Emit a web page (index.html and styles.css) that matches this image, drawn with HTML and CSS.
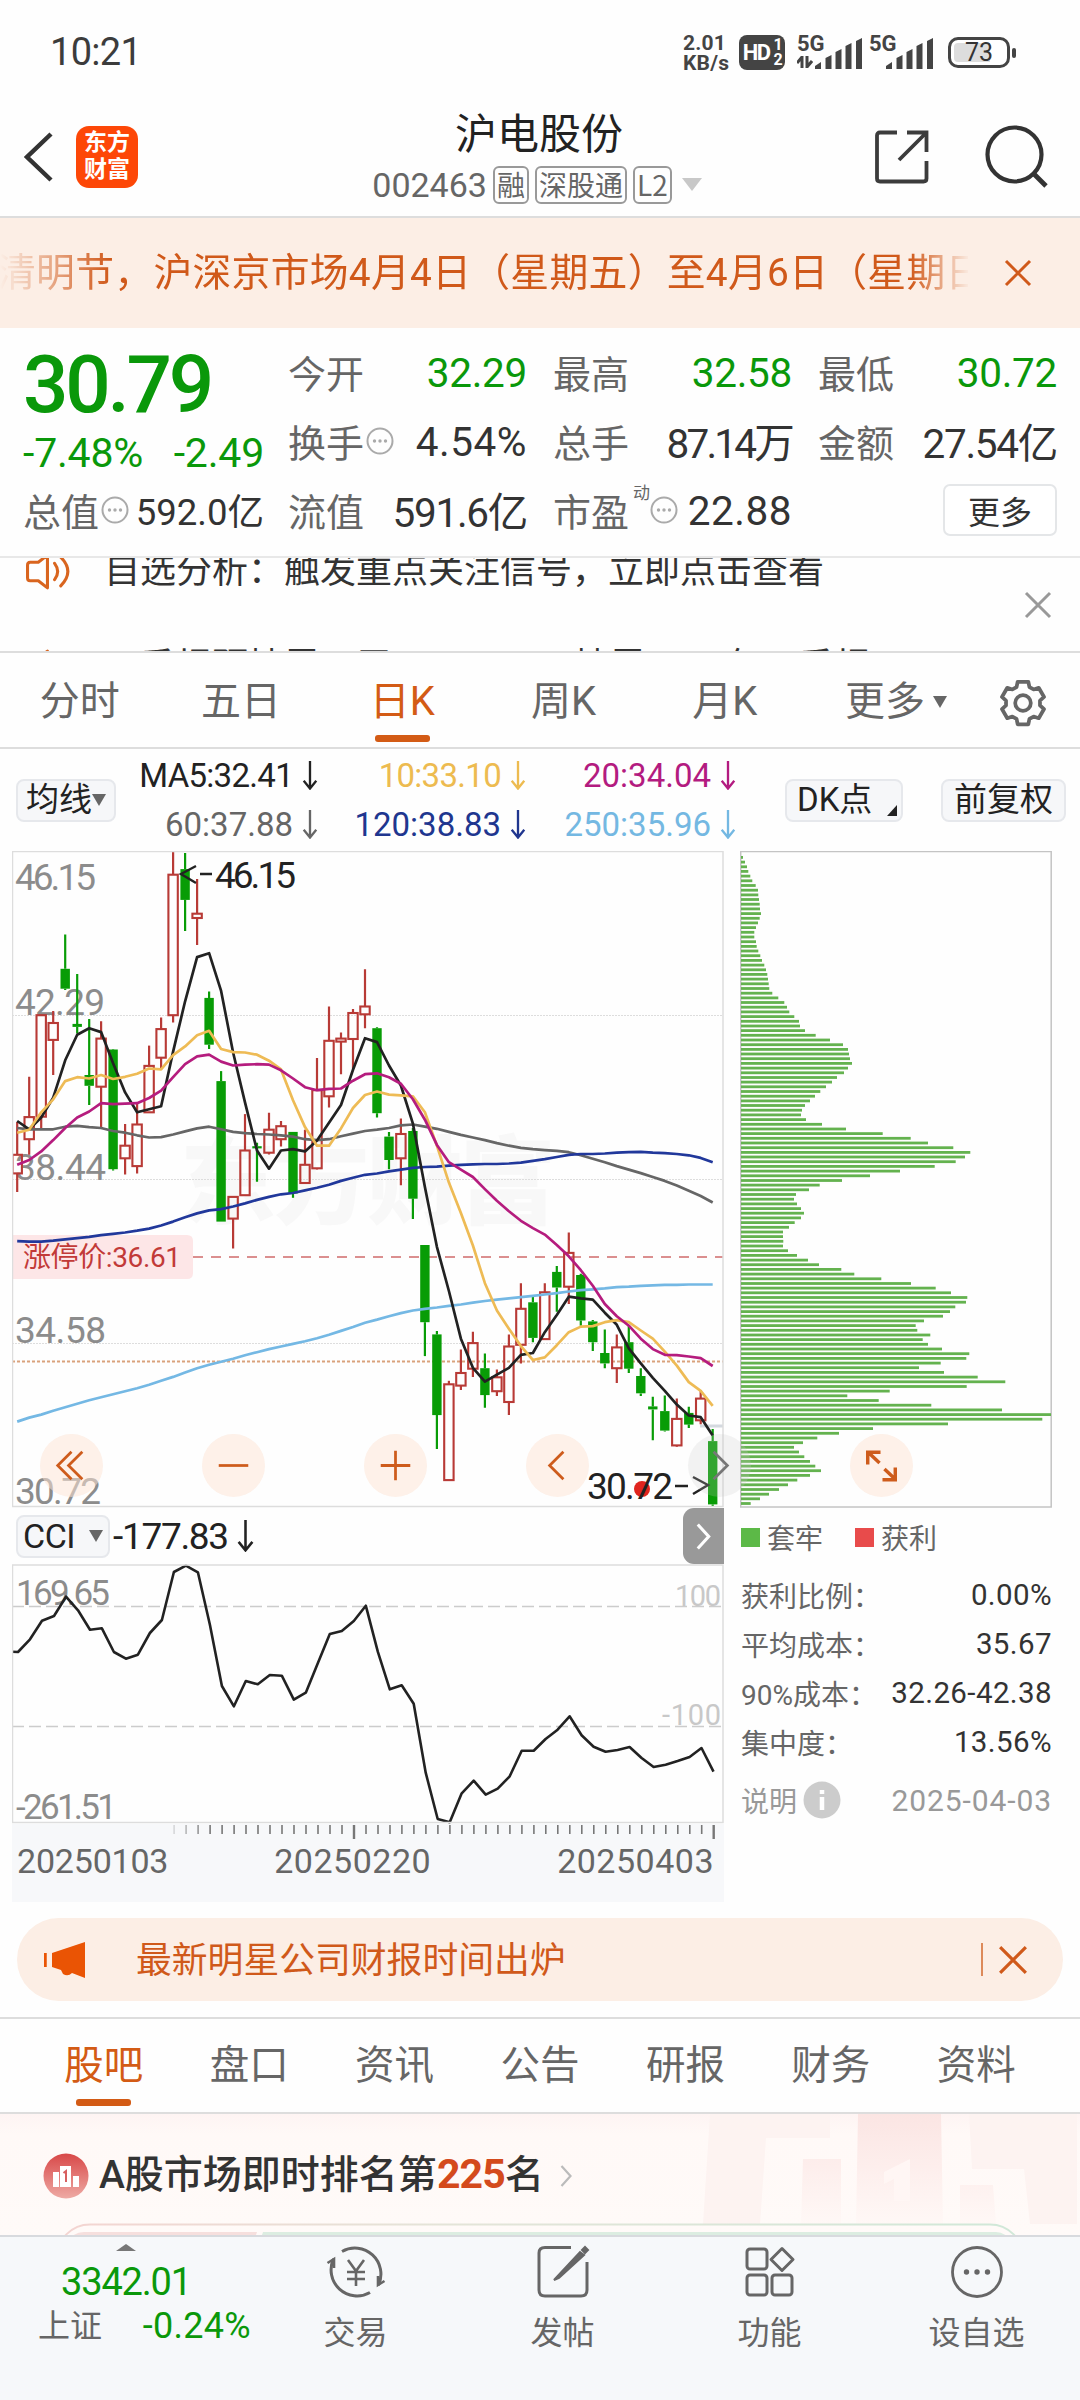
FILE: index.html
```html
<!DOCTYPE html>
<html lang="zh-CN">
<head>
<meta charset="utf-8">
<title>沪电股份 002463</title>
<link rel="stylesheet" href="styles.css">
</head>
<body>
<svg class="defs" width="0" height="0" aria-hidden="true">
  <symbol id="close" viewBox="0 0 28 28"><path d="M2 2 26 26M26 2 2 26" fill="none" stroke="currentColor" stroke-width="3"/></symbol>
  <symbol id="dots" viewBox="0 0 28 28"><circle cx="14" cy="14" r="12.500" fill="none" stroke="currentColor" stroke-width="2"/><g fill="currentColor"><circle cx="8.500" cy="14" r="1.700"/><circle cx="14" cy="14" r="1.700"/><circle cx="19.500" cy="14" r="1.700"/></g></symbol>
  <symbol id="down" viewBox="0 0 16 30"><path d="M8 0V28M1.500 20.500 8 28.500 14.500 20.500" fill="none" stroke="currentColor" stroke-width="2.400"/></symbol>
  <symbol id="speaker" viewBox="0 0 46 36"><g fill="none" stroke="currentColor" stroke-width="3" stroke-linecap="round" stroke-linejoin="round"><path d="M21 34 12 27H4Q1.500 27 1.500 24V12Q1.500 9 4 9H12L21 2Z"/><path d="M28 10Q34 18 28 26M34 4Q48 18 34 32"/></g></symbol>
  <symbol id="bars" viewBox="0 0 49 31"><path d="M1 31V28L7 24V31ZM11.500 31V20L17.500 17V31ZM21.500 31V14L27.500 11V31ZM31.500 31V8L37.500 5V31ZM42 31V3L48 0V31Z" fill="currentColor"/></symbol>
</svg>

<header class="status">
  <span class="clock">10:21</span>
  <span class="net">2.01<br>KB/s</span>
  <span class="hd">HD<small>1<br>2</small></span>
  <span class="signal"><b>5G</b><svg class="arrows" viewBox="0 0 16 12"><path d="M5 12V1L0 7M10 0V11L15 5" fill="none" stroke="#444" stroke-width="3"/></svg><svg class="bars"><use href="#bars"/></svg></span>
  <span class="signal second"><b>5G</b><svg class="bars"><use href="#bars"/></svg></span>
  <span class="battery"><i></i>73</span>
</header>

<nav class="topbar">
  <svg class="back" viewBox="0 0 30 50"><path d="M27 2 3 25 27 48" fill="none" stroke="#333" stroke-width="4.500"/></svg>
  <span class="logo">东方<br>财富</span>
  <div class="title">
    <h1>沪电股份</h1>
    <div class="code"><span>002463</span><em>融</em><em>深股通</em><em>L2</em><i class="tri"></i></div>
  </div>
  <svg class="share" viewBox="0 0 54 54"><path d="M22 2.500H5Q2 2.500 2 5.500V48.500Q2 51.500 5 51.500H48.500Q51.500 51.500 51.500 48.500V31M32 2.500H51.500V22M51 3 24 30" fill="none" stroke="#3c3c3c" stroke-width="3.800"/></svg>
  <svg class="search" viewBox="0 0 64 64"><circle cx="29.500" cy="29.500" r="27" fill="none" stroke="#333" stroke-width="4.200"/><path d="M48 48 61 61" stroke="#333" stroke-width="4.800"/></svg>
</nav>

<section class="notice">
  <div class="marquee">清明节，沪深京市场4月4日（星期五）至4月6日（星期日</div>
  <svg class="x"><use href="#close"/></svg>
</section>

<section class="quote">
  <div class="price">
    <strong>30.79</strong>
    <div class="change"><span>-7.48%</span><span>-2.49</span></div>
    <div class="pair cap"><label>总值</label><svg class="dots"><use href="#dots"/></svg><b>592.0亿</b></div>
  </div>
  <div class="facts">
    <div class="pair"><label>今开</label><b class="g">32.29</b></div>
    <div class="pair"><label>最高</label><b class="g">32.58</b></div>
    <div class="pair"><label>最低</label><b class="g">30.72</b></div>
    <div class="pair"><label>换手</label><svg class="dots"><use href="#dots"/></svg><b class="wide">4.54%</b></div>
    <div class="pair"><label>总手</label><b class="narrow">87.14万</b></div>
    <div class="pair"><label>金额</label><b class="tight">27.54亿</b></div>
    <div class="pair"><label>流值</label><b class="tight">591.6亿</b></div>
    <div class="pair"><label>市盈</label><sup>动</sup><svg class="dots"><use href="#dots"/></svg><b class="wide">22.88</b></div>
    <div class="pair"><button>更多</button></div>
  </div>
</section>

<section class="ticker">
  <div class="reel">
    <p><svg><use href="#speaker"/></svg>自选分析：触发重点关注信号，立即点击查看</p>
    <p><svg><use href="#speaker"/></svg>一季报预披露：于2025-04-25披露2025年一季报</p>
  </div>
  <svg class="x"><use href="#close"/></svg>
</section>

<nav class="periods">
  <span>分时</span><span>五日</span><span class="on">日K</span><span>周K</span><span>月K</span><span class="more">更多<i class="tri"></i></span>
  <svg class="gear" viewBox="0 0 48 48"><g fill="none" stroke="#666" stroke-width="3.600" stroke-linejoin="round"><path d="M18.900 3.600H29.100L30.200 8.700 34.200 11 39.100 9.400 44.200 18.200 40.300 21.700V26.300L44.200 29.800 39.100 38.600 34.200 37 30.200 39.300 29.100 44.400H18.900L17.800 39.300 13.800 37 8.900 38.600 3.800 29.800 7.700 26.300V21.700L3.800 18.200 8.900 9.400 13.800 11 17.800 8.700Z"/><circle cx="24" cy="24" r="7.500"/></g></svg>
</nav>

<section class="averages">
  <span class="chip">均线<i class="tri"></i></span>
  <div class="ma">
    <span class="c5">MA5:32.41<svg><use href="#down"/></svg></span><span class="c10">10:33.10<svg><use href="#down"/></svg></span><span class="c20">20:34.04<svg><use href="#down"/></svg></span>
    <span class="c60">60:37.88<svg><use href="#down"/></svg></span><span class="c120">120:38.83<svg><use href="#down"/></svg></span><span class="c250">250:35.96<svg><use href="#down"/></svg></span>
  </div>
  <span class="chip dk">DK点<i class="corner"></i></span>
  <span class="chip">前复权</span>
</section>

<section class="charts">
  <div class="left">
    <svg id="kline" viewBox="12 851 712 657" width="712" height="657"></svg>
    <div class="indicator">
      <span class="chip">CCI<i class="tri"></i></span><b>-177.83</b><svg class="arrow"><use href="#down"/></svg>
      <span class="fold"><svg viewBox="0 0 14 26"><path d="M1.500 1.500 12 13 1.500 24.500" fill="none" stroke="#fff" stroke-width="3"/></svg></span>
    </div>
    <svg id="cci" viewBox="12 1564 712 260" width="712" height="260"></svg>
    <div class="axis">
      <svg id="ticks" viewBox="12 1824 712 16" width="712" height="16"></svg>
      <div class="dates"><span>20250103</span><span>20250220</span><span>20250403</span></div>
    </div>
  </div>
  <div class="right">
    <svg id="chips" viewBox="740 851 312 657" width="312" height="657"></svg>
    <div class="legend"><i class="lose"></i>套牢<i class="win"></i>获利</div>
    <dl>
      <div><dt>获利比例：</dt><dd>0.00%</dd></div>
      <div><dt>平均成本：</dt><dd>35.67</dd></div>
      <div><dt>90%成本：</dt><dd>32.26-42.38</dd></div>
      <div><dt>集中度：</dt><dd>13.56%</dd></div>
    </dl>
    <div class="explain">说明<svg viewBox="0 0 38 38"><circle cx="19" cy="19" r="18.500" fill="#ccc"/><path d="M19 9V13M19 16V29" stroke="#fff" stroke-width="4.500"/></svg><time>2025-04-03</time></div>
  </div>
  <div class="controls">
    <i><svg viewBox="0 0 64 64"><path d="M32 18 18 32 32 46M43 18 29 32 43 46"/></svg></i>
    <i><svg viewBox="0 0 64 64"><path d="M17 32H47"/></svg></i>
    <i><svg viewBox="0 0 64 64"><path d="M17 32H47M32 17V47"/></svg></i>
    <i><svg viewBox="0 0 64 64"><path d="M38 18 24 32 38 46"/></svg></i>
    <i class="off"><svg viewBox="0 0 64 64"><path d="M26 18 40 32 26 46"/></svg></i>
    <i><svg viewBox="0 0 64 64"><path stroke-width="3.500" d="M18 31V18.500H31M19 19 30 29.500M46 34V46.500H33M46 46 35 35.500"/></svg></i>
  </div>
</section>

<section class="promo">
  <svg class="horn" viewBox="0 0 42 36"><path d="M1 11V25" stroke="#ea5404" stroke-width="3.500"/><path d="M8 11 41 0V36L28 31Q24 35 19 32L17 28 8 25Z" fill="#ea5404"/></svg>
  <span>最新明星公司财报时间出炉</span>
  <i></i><svg class="x"><use href="#close"/></svg>
</section>

<nav class="tabs"><span class="on">股吧</span><span>盘口</span><span>资讯</span><span>公告</span><span>研报</span><span>财务</span><span>资料</span></nav>

<section class="rank">
  <svg class="podium" viewBox="700 2113 380 122" width="380" height="122">
    <defs><linearGradient id="fade" x2="0" y2="1"><stop stop-color="#fbe5e3"/><stop offset="1" stop-color="#fff8f6"/></linearGradient></defs>
    <path d="M710 2113H830V2137H766L760 2223H703ZM969 2113H1077V2223H1030L1024 2168H972Z" fill="#fdf3f1"/>
    <path d="M803 2158H841V2223H801ZM960 2184H993L996 2223H960ZM858 2113H941L943 2223H856Z" fill="url(#fade)"/>
    <path d="M910 2158V2200H894V2178L884 2183V2171Z" fill="#fff6f4"/>
  </svg>
  <div class="line">
    <svg class="badge" viewBox="0 0 46 46"><defs><linearGradient id="rb" x2="0" y2="1"><stop stop-color="#d84848"/><stop offset="1" stop-color="#eeaaa4"/></linearGradient></defs><circle cx="23" cy="23" r="22.500" fill="url(#rb)"/><path d="M10 19H16V34H10ZM17 13H28V34H17ZM30 23H36V34H30Z" fill="#fff"/><path d="M20.500 20 23 18V29" fill="none" stroke="#d86060" stroke-width="2"/></svg>
    <h2>A股市场即时排名第<b>225</b>名</h2>
    <svg class="next" viewBox="0 0 12 22"><path d="M1.500 1 10.500 11 1.500 21" fill="none" stroke="#bbb" stroke-width="2.200"/></svg>
  </div>
  <svg class="meter" viewBox="60 2222 960 14" width="960" height="14">
    <defs><linearGradient id="rim"><stop stop-color="#f4d4d1"/><stop offset=".4" stop-color="#e4e4d8"/><stop offset="1" stop-color="#d0e8d8"/></linearGradient></defs>
    <rect x="57" y="2223.500" width="966" height="66" rx="33" fill="none" stroke="url(#rim)" stroke-width="2"/>
    <path d="M70 2237Q76 2231 84 2231H257L255 2237Z" fill="#f6dfdd"/><path d="M263 2231H996Q1003 2231 1009 2237H261Z" fill="#dcede1"/>
  </svg>
</section>

<footer>
  <div class="index"><i class="up"></i><b>3342.01</b><div><span>上证</span><b>-0.24%</b></div></div>
  <div class="item"><svg viewBox="0 0 60 56"><g fill="none" stroke="#666" stroke-width="3"><path d="M16 7.500A26 26 0 0 1 52.500 41M44 48.500A26 26 0 0 1 7.500 15"/><path d="M1.500 19 8 15V24M58.500 37 52 41V32M22 16 30 27 38 16M30 27V42M21 28H39M21 35H39" stroke-width="2.600"/></g></svg>交易</div>
  <div class="item"><svg viewBox="0 0 60 56"><path d="M38 3.500H12Q6 3.500 6 9V46Q6 52 12 52H48Q54 52 54 46V18" fill="none" stroke="#666" stroke-width="3"/><path d="M21 36 47 8 51 11 26 34ZM49 6 52 3 55 6 52 9Z" fill="#666" stroke="#666" stroke-width="2"/></svg>发帖</div>
  <div class="item"><svg viewBox="0 0 60 56"><g fill="none" stroke="#666" stroke-width="3"><rect x="7" y="5" width="20" height="20" rx="3"/><rect x="7" y="31" width="20" height="20" rx="3"/><rect x="32" y="31" width="20" height="20" rx="3"/><path d="M42 4.500 53 15.500 42 26.500 31 15.500Z" stroke-linejoin="round"/></g></svg>功能</div>
  <div class="item"><svg viewBox="0 0 60 56"><circle cx="30" cy="28" r="24.500" fill="none" stroke="#666" stroke-width="2.800"/><g fill="#666"><circle cx="19.500" cy="28" r="2.700"/><circle cx="30" cy="28" r="2.700"/><circle cx="40.500" cy="28" r="2.700"/></g></svg>设自选</div>
</footer>
<script src="chart.js"></script>
</body>
</html>
```

FILE: styles.css
```css
* { box-sizing: border-box; margin: 0; padding: 0; }
body { width: 1080px; height: 2400px; overflow: hidden; background: #fefefe; color: #333; font-family: Roboto, "Noto Sans CJK SC", sans-serif; font-size: 38px; }
svg { display: block; flex: none; }
i, em { font-style: normal; }
b { font-weight: 400; }
.defs { position: absolute; }
.tri { width: 0; height: 0; flex: none; border: 7px solid transparent; border-top: 12px solid #666; border-bottom: 0; }
.x { width: 28px; height: 28px; }

.status { height: 104px; display: flex; align-items: center; padding: 0 70px 0 50px; color: #444; }
.clock { font-size: 38px; font-weight: 400; margin-right: auto; letter-spacing: -.7px; color: #3c3c3c; }
.net { font-size: 21px; line-height: 20px; font-weight: 700; width: 56px; letter-spacing: .2px; padding-top: 2px; }
.hd { width: 46px; height: 35px; border-radius: 8px; background: #444; color: #fff; font-size: 22px; font-weight: 700; display: flex; align-items: center; justify-content: center; margin-right: 12px; letter-spacing: -1.5px; }
.hd small { font-size: 16px; line-height: 15px; margin-left: 4px; }
.signal { position: relative; width: 66px; height: 34px; margin-right: 6px; display: flex; align-items: flex-end; justify-content: flex-end; }
.signal b { position: absolute; left: 0; top: -2px; font-size: 22px; line-height: 22px; font-weight: 700; }
.signal .bars { width: 49px; height: 31px; color: #444; }
.signal .arrows { position: absolute; left: 0; bottom: 1px; width: 16px; height: 12px; }
.signal.second { margin-right: 14px; width: 65px; }
.battery { position: relative; width: 62px; height: 31px; border: 3px solid #444; border-radius: 10px; font-size: 25px; line-height: 26px; text-align: center; color: #333; background: linear-gradient(90deg, #ddd 70%, #fff 70%); box-shadow: inset 0 0 0 3px #fff; }
.battery i { position: absolute; right: -9px; top: 8px; width: 4px; height: 10px; border-radius: 2px; background: #444; }

.topbar { height: 114px; border-bottom: 2px solid #ddd; display: flex; align-items: center; padding: 0 31px 7px 24px; }
.back { width: 30px; height: 50px; }
.logo { width: 62px; height: 62px; margin-left: 22px; border-radius: 13px; background: #fd4707; color: #fff; font-size: 23px; font-weight: 700; line-height: 27px; text-align: center; padding-top: 3px; }
.title { flex: 1; padding-left: 61px; display: flex; flex-direction: column; align-items: center; }
h1 { font-size: 42px; line-height: 54px; font-weight: 400; color: #222; position: relative; left: 2px; }
.code { display: flex; align-items: center; gap: 6px; font-size: 34px; line-height: 42px; color: #666; margin-top: 2px; }
.code em { border: 2px solid #999; border-radius: 6px; height: 38px; line-height: 33px; font-size: 28px; padding: 0 2px; font-family: "Noto Sans CJK SC"; letter-spacing: 0; }
.code .tri { border-width: 13px 10px 0; border-top-color: #c8c8c8; margin-left: 4px; }
.share { width: 54px; height: 54px; }
.search { width: 64px; height: 64px; margin-left: 56px; }

.notice { height: 110px; background: #fceee5; display: flex; align-items: center; justify-content: space-between; padding-right: 48px; color: #d0591a; }
.marquee { width: 968px; overflow: hidden; white-space: nowrap; font-size: 38.800px; text-indent: -3px; letter-spacing: .3px; line-height: 60px; -webkit-mask-image: linear-gradient(90deg, transparent, #000 110px, #000 910px, transparent 970px); mask-image: linear-gradient(90deg, transparent, #000 110px, #000 910px, transparent 970px); }

.quote { height: 230px; border-bottom: 2px solid #e8e8e8; display: flex; padding: 10px 22px 0 23px; }
.price { width: 241px; color: #0a980a; margin-right: 24px; }
.price strong { display: block; font-size: 80px; line-height: 94px; height: 94px; font-weight: 500; letter-spacing: -3.200px; }
.change { display: flex; justify-content: space-between; font-size: 41px; line-height: 42px; height: 43px; letter-spacing: -.2px; }
.facts { flex: 1; display: grid; grid-template-columns: repeat(3, 239px); column-gap: 26px; grid-auto-rows: 69px; margin-top: -1px; }
.pair { display: flex; align-items: center; height: 69px; white-space: nowrap; }
.pair label { color: #666; font-size: 38px; margin-top: -1px; }
.pair b { margin-left: auto; color: #333; font-size: 40.500px; letter-spacing: -.7px; }
.pair b.g { color: #0a980a; letter-spacing: -.3px; margin-top: 2px; }
.pair b.wide { letter-spacing: .5px; margin-top: 2px; }
.pair b.tight { letter-spacing: -1.3px; }
.pair b.narrow { letter-spacing: -2.800px; }
.pair.cap b { font-size: 36.500px; letter-spacing: 0; }
.dots { width: 28px; height: 28px; margin-left: 2px; color: #aaa; }
.pair sup { font-size: 17px; line-height: 17px; align-self: flex-start; margin: 10px 0 0 4px; color: #666; width: 17px; }
.pair sup + .dots { margin-left: 0; }
.pair button { margin-left: auto; width: 114px; height: 52px; border: 2px solid #e4e6e8; border-radius: 7px; background: #fff; color: #333; font: 32px "Noto Sans CJK SC"; line-height: 46px; }

.ticker { position: relative; height: 95px; overflow: hidden; border-bottom: 2px solid #ddd; display: flex; align-items: center; justify-content: space-between; padding-right: 28px; }
.reel { align-self: flex-start; margin-top: -35px; }
.reel p { display: flex; align-items: center; height: 96px; padding-left: 26px; font-size: 36px; line-height: 40px; }
.reel svg { width: 47px; height: 37px; margin-right: 31px; color: #d9651f; }
.ticker .x { color: #999; }

.periods { height: 96px; border-bottom: 2px solid #ddd; display: flex; align-items: flex-start; padding: 25px 32px 0 0; line-height: 48px; font-size: 40px; color: #666; }
.periods span { width: 161.300px; text-align: center; position: relative; left: -1px; }
.periods .on, .tabs .on { color: #d35b15; }
.periods .on::after, .tabs .on::after { content: ""; display: block; width: 55px; height: 7px; border-radius: 3px; background: #d35b15; margin: 9px auto 0; }
.periods .more { width: 180px; display: flex; align-items: center; justify-content: center; gap: 8px; margin-left: auto; }
.gear { width: 50px; height: 50px; margin-left: 11px; }

.averages { height: 102px; display: flex; align-items: center; padding: 0 14px 0 16px; }
.chip { height: 43px; border: 2px solid #e6e8ec; border-radius: 8px; background: #f6f7f9; font-size: 33px; line-height: 36px; padding: 0 8px; color: #222; display: flex; align-items: center; }
.averages .chip:last-child { padding: 0 11px; }
.ma { display: grid; grid-template-columns: 202px 208px 210px; grid-auto-rows: 49px; margin-right: auto; line-height: 49px; font-size: 33px; letter-spacing: -.7px; }
.ma span { display: flex; align-items: center; justify-content: flex-end; }
.ma svg { width: 16px; height: 29px; margin-left: 9px; }
.c5 { color: #222; } .c10 { color: #edbb50; } .c20 { color: #b31b80; } .c60 { color: #666; } .c120 { color: #20368f; } .c250 { color: #74b8e2; }
.ma .c20, .ma .c60, .ma .c120, .ma .c250 { letter-spacing: 0; }
.dk { margin-right: 38px; width: 118px; position: relative; padding: 0 10px; }
.corner { position: absolute; right: 4px; bottom: 4px; border-style: solid; border-width: 0 0 11px 10px; border-color: transparent transparent #222; }

.charts { position: relative; height: 1067px; padding-left: 12px; display: flex; gap: 16px; }
.left { width: 712px; }
.right { width: 312px; font-size: 28px; color: #666; }
.indicator { height: 56px; display: flex; align-items: center; font-size: 37px; color: #222; padding-left: 4px; }
.indicator .chip { width: 94px; padding: 0 5px; font-size: 34px; justify-content: space-between; letter-spacing: -.5px; }
.indicator b { letter-spacing: -1.3px; margin-left: 3px; }
.indicator .arrow { width: 17px; height: 32px; margin-left: 9px; }
.fold { width: 41px; height: 56px; margin-left: auto; background: #999; border-radius: 11px 0 0 11px; display: flex; align-items: center; justify-content: center; }
.fold svg { width: 15px; height: 27px; }
.axis { height: 78px; background: #f7f8fa; }
.dates { display: flex; justify-content: space-between; padding: 0 10px 0 5px; font-size: 34px; line-height: 42px; color: #666; letter-spacing: .5px; }
.dates span:first-child { letter-spacing: -.2px; }
.dates span:nth-child(2) { margin-right: 20px; }
.legend { height: 58px; display: flex; align-items: center; }
.legend i { width: 19px; height: 19px; margin: 0 7px 0 1px; background: #5cb947; }
.legend .win { margin-left: 32px; background: #e84b4b; }
dl div { display: flex; justify-content: space-between; align-items: center; height: 48.800px; padding-left: 1px; }
dl { padding-top: 5px; }
dd { color: #333; font-size: 29.500px; letter-spacing: .4px; }
dt { font-size: 28px; white-space: nowrap; width: 130px; }
.explain { display: flex; align-items: center; height: 60px; margin-top: 4px; color: #999; padding-left: 1px; }
.explain svg { width: 38px; height: 38px; margin-left: 6px; }
.explain time { margin-left: auto; font-size: 30px; letter-spacing: .9px; }
.controls i { position: absolute; top: 583px; width: 63px; height: 63px; border-radius: 50%; background: rgba(253, 228, 212, .52); }
.controls svg { width: 63px; height: 63px; fill: none; stroke: #ce5c1c; stroke-width: 2.800; }
.controls i:nth-child(1) { left: 40px; } .controls i:nth-child(2) { left: 202px; } .controls i:nth-child(3) { left: 364px; } .controls i:nth-child(4) { left: 526px; } .controls i:nth-child(5) { left: 688px; } .controls i:nth-child(6) { left: 850px; }
.controls .off { background: rgba(200, 200, 200, .22); }
.controls .off svg { stroke: #777; }

.promo { margin: 0 17px; height: 83px; border-radius: 42px; background: #fceee5; color: #d0591a; display: flex; align-items: center; padding: 0 35px 0 27px; font-size: 35.800px; }
.promo span { line-height: 48px; margin-top: 2px; }
.horn { width: 42px; height: 36px; margin-right: 50px; }
.promo i { width: 2px; height: 33px; background: #dd8a5a; margin: 0 15px 0 auto; }
.promo .x { width: 30px; height: 30px; }

.tabs { margin-top: 16px; height: 97px; border-top: 2px solid #ddd; border-bottom: 2px solid #ddd; padding: 23px 31px 0; display: flex; font-size: 39.500px; line-height: 48px; color: #666; }
.tabs span { flex: 1; text-align: center; }
.tabs .on::after { margin-top: 9px; }

.rank { position: relative; height: 121px; background: linear-gradient(#fef4f3, #fff9f7 20px, #fffaf8); overflow: hidden; }
.podium { position: absolute; right: 0; top: 0; }
.line { position: relative; display: flex; align-items: center; height: 109px; padding: 14px 0 0 43px; }
.badge { width: 46px; height: 46px; margin-right: 10px; }
h2 { font-size: 39px; line-height: 50px; font-weight: 500; color: #333; margin-top: -2px; }
h2 b { font-weight: 700; color: #d44a1c; font-size: 41px; letter-spacing: -.8px; }
.next { width: 12px; height: 22px; margin-left: 16px; }
.meter { position: relative; margin-left: 60px; }

footer { height: 166px; background: #f6f8fa; border-top: 2px solid #d8dade; display: flex; font-size: 32px; color: #666; }
.index { width: 252px; display: flex; flex-direction: column; align-items: center; color: #0a980a; }
.index .up { margin-top: 7px; border: 10px solid transparent; border-top: 0; border-bottom: 7px solid #777; height: 7px; }
.index > b { font-size: 38px; line-height: 44px; margin-top: 9px; letter-spacing: -1.2px; }
.index div { align-self: stretch; display: flex; justify-content: space-between; padding: 0 1px 0 38px; line-height: 44px; font-size: 36px; }
.index div b { letter-spacing: .3px; }
.index span { color: #666; font-size: 32px; }
.item { flex: 1; display: flex; flex-direction: column; align-items: center; line-height: 46px; padding-top: 7px; }
.item svg { width: 60px; height: 56px; margin-bottom: 10px; }
```

FILE: chart.js
```js
// Horizontal position of the n-th trading day and vertical scale of the price pane.
const dayX = n => 17.2 + n * 11.992;
const py = v => 840 + v / 2.3059;
const f = v => v.toFixed(1);

// [rising, high, bodyTop, bodyBottom, low]
const candles = [
  [1,650,726,769,812],[1,546,639,690,726],[1,403,404,638,664],[1,394,422,461,542],[0,218,297,343,346],
  [0,309,424,431,446],[0,413,542,567,611],[1,418,458,569,662],[0,482,483,759,762],[1,655,705,734,771],
  [1,605,656,752,769],[1,474,521,628,628],[1,409,436,502,526],[1,26,80,404,421],[0,30,67,138,210],
  [1,90,170,180,242],[0,349,364,472,482],[0,533,556,880,880],[1,821,823,873,942],[1,632,716,819,819],
  [0,698,706,711,788],[1,629,668,721,725],[1,648,660,690,707],[0,673,673,815,825],[1,668,749,791,791],
  [1,503,577,757,760],[1,384,463,591,617],[1,444,458,465,540],[1,390,399,459,528],[1,298,384,402,434],
  [0,432,434,630,640],[0,673,684,738,759],[1,642,678,734,796],[0,664,671,827,874],[0,934,934,1112,1190],
  [0,1132,1140,1326,1404],[1,1247,1255,1476,1476],[1,1175,1229,1258,1268],[1,1134,1160,1219,1238],[0,1184,1218,1280,1309],
  [1,1221,1239,1271,1282],[1,1140,1168,1296,1326],[1,1022,1081,1164,1207],[0,1052,1066,1148,1158],[1,1022,1043,1151,1153],
  [0,982,996,1032,1088],[1,905,952,1030,1070],[0,1000,1003,1108,1120],[0,1107,1110,1158,1178],[0,1129,1183,1207,1218],
  [1,1140,1170,1218,1252],[0,1120,1158,1219,1229],[0,1218,1236,1276,1282],[0,1284,1306,1313,1384],[0,1281,1317,1362,1364],
  [1,1288,1335,1396,1399],[0,1307,1321,1348,1356],[1,1268,1288,1338,1347],[0,1358,1386,1532,1538]
];
const averages = [
  ['#666', [664,667,667,667,661,659,662,664,671,675,681,686,685,679,672,665,661,667,673,676,678,679,681,684,690,692,690,683,677,671,668,664,658,656,661,666,673,680,686,692,699,705,710,713,715,717,720,727,735,743,752,760,768,777,786,797,809,821,836]],
  ['#74b8e4', [1341,1332,1325,1316,1308,1300,1292,1285,1278,1271,1264,1256,1247,1238,1228,1218,1210,1203,1196,1188,1181,1174,1168,1162,1156,1149,1141,1132,1123,1113,1106,1098,1091,1085,1081,1078,1074,1071,1067,1063,1060,1057,1054,1051,1048,1045,1041,1038,1036,1034,1031,1030,1028,1027,1026,1026,1025,1025,1025]],
  ['#21389b', [925,926,926,924,921,918,915,911,908,905,901,896,889,880,870,861,854,851,845,838,830,823,817,814,808,802,795,786,779,772,769,764,760,756,754,753,751,749,748,747,747,746,744,740,736,731,726,724,724,723,721,720,719,721,722,724,727,733,743]],
  ['#222', [648,667,640,594,508,449,434,443,515,582,628,621,614,488,372,270,261,348,490,605,716,758,716,713,718,693,652,611,530,457,466,520,566,654,800,938,1040,1150,1217,1249,1233,1217,1187,1183,1135,1095,1053,1057,1060,1090,1118,1172,1207,1240,1270,1302,1327,1331,1373]],
  ['#eebb55', [675,668,628,598,556,547,550,542,551,546,539,527,529,496,476,450,440,482,489,490,495,509,529,600,662,705,705,665,618,588,580,587,589,591,628,705,790,860,935,1022,1085,1127,1167,1199,1193,1165,1135,1122,1121,1112,1107,1112,1131,1150,1180,1212,1250,1270,1305]],
  ['#b51c7e', [749,738,718,692,664,640,626,607,609,608,607,595,578,547,517,499,495,511,520,518,517,518,531,550,570,577,574,573,555,540,538,547,562,598,645,703,743,760,777,805,832,856,878,895,910,934,960,992,1028,1070,1098,1120,1150,1174,1187,1188,1191,1195,1213]]
];
const cci = [456,418,362,348,290,331,389,385,456,476,464,399,360,216,197,217,374,558,619,543,553,525,527,599,578,490,402,393,363,317,455,568,556,611,818,957,967,880,842,884,866,829,752,752,717,689,649,706,740,755,750,741,774,801,794,783,771,744,815];
const holdings = [54,60,66,70,76,82,92,99,100,102,104,105,108,104,99,93,88,88,93,95,100,106,111,118,123,127,129,131,133,142,160,178,186,193,208,222,225,240,272,315,354,369,372,375,381,369,357,336,321,303,286,270,255,240,231,228,243,291,363,473,557,609,685,736,720,692,629,525,435,351,284,252,213,207,216,228,237,228,209,192,174,174,175,174,189,216,249,282,349,388,469,558,632,678,727,723,691,675,654,597,572,577,616,593,609,651,733,724,647,582,657,758,841,725,494,367,461,619,831,978,952,669,444,342,277,234,207,222,238,255,271,288,255,217,189,162,132,105,77];

const text = (s, x, base, w, color, size = 36, extra = '') =>
  `<text x="${x}" y="${base}" font-size="${size}" fill="${color}" textLength="${w}" ${extra}>${s}</text>`;
const path = (pts, color, w) =>
  `<polyline points="${pts.join(' ')}" fill="none" stroke="${color}" stroke-width="${w}" stroke-linejoin="round"/>`;

let k = '';
k += text('东方财富', 180, 1216, 376, '#f8f8f8', 96, 'font-weight="900" font-family="Noto Sans CJK SC"');
[1015.5, 1179.5, 1343.5].forEach(y => k += `<path d="M12 ${y}H723" stroke="#ddd" stroke-dasharray="2 1"/>`);
k += '<path d="M12 1361.500H723" stroke="#d9a27c" stroke-width="1.800" stroke-dasharray="3 2"/>';
k += '<path d="M193 1257H723" stroke="#cf6b6b" stroke-width="1.700" stroke-dasharray="10 8"/>';
[['46.15', 890, 81], ['42.29', 1015, 90], ['38.44', 1180, 91], ['34.58', 1343, 91], ['30.72', 1504, 86]]
  .forEach(([s, y, w]) => k += text(s, 15, y, w, '#8c8c8c', 37));
k += '<path d="M700 1426H723" stroke="#d4d9df" stroke-width="3"/>';
k += '<path d="M12 1235H187Q193 1235 193 1241V1273Q193 1279 187 1279H12Z" fill="#fde6e7"/>';
candles.forEach(([up, hi, top, bot, lo], n) => {
  const x = dayX(n), t = py(top), b = py(bot), c = up ? '#b83a36' : '#089c06';
  k += `<path d="M${f(x)} ${f(py(hi))}V${f(t)}M${f(x)} ${f(b)}V${f(py(lo))}" stroke="${c}" stroke-width="2.200"/>`;
  k += up
    ? `<rect x="${f(x - 4.7)}" y="${f(t)}" width="9.400" height="${f(Math.max(b - t, 2))}" fill="none" stroke="${c}" stroke-width="2.100"/>`
    : `<rect x="${f(x - 4.7)}" y="${f(t)}" width="9.400" height="${f(Math.max(b - t, 2))}" fill="${c}"/>`;
});
averages.forEach(([c, v]) => k += path(v.map((y, n) => f(dayX(n)) + ',' + f(py(y))), c, 2.7));
k += text('涨停价:36.61', 23, 1267, 158, '#c23a38', 28);
k += '<path d="M196 866 181 874 196 883M200 874H212" fill="none" stroke="#222" stroke-width="2.400"/>' + text('46.15', 215, 888, 81, '#222', 37);
k += '<circle cx="642" cy="1489" r="8" fill="#e0251f"/>';
k += text('30.72', 587, 1499, 86, '#222', 37) + '<path d="M675 1486H688M693 1477 708 1485 693 1494" fill="none" stroke="#222" stroke-width="2.400"/>';
k += '<rect x="12.500" y="851.500" width="710.500" height="655" fill="none" stroke="#ddd" stroke-width="1.500"/>';
document.getElementById('kline').innerHTML = k;

let c = '<path d="M12 1606.500H723M12 1726.500H723" stroke="#ccc" stroke-width="1.300" stroke-dasharray="12 5"/>';
c += text('169.65', 16, 1605, 94, '#8c8c8c', 35) + text('-261.51', 16, 1819, 101, '#8c8c8c', 35);
c += text('100', 675, 1606, 46, '#c8c8c8', 29) + text('-100', 662, 1725, 59, '#c8c8c8', 29);
c += path(['12,1651.700'].concat(cci.map((y, n) => f(dayX(n) + 0.8) + ',' + f(1500 + y / 3))), '#222', 2.6);
c += '<rect x="12.500" y="1565" width="710.500" height="257.500" fill="none" stroke="#ddd" stroke-width="1.500"/>';
document.getElementById('cci').innerHTML = c;

let t = '';
for (let n = 13; n < 59; n++) {
  const major = n === 28 || n === 58;
  t += `<path d="M${f(dayX(n) + 1)} 1825V${major ? 1839 : 1834}" stroke="#777" stroke-width="${major ? 2.4 : 1.6}" opacity="${Math.min(1, (n - 12) / 4)}"/>`;
}
document.getElementById('ticks').innerHTML = t;

let h = '<rect x="740.700" y="851.500" width="310.500" height="655.500" fill="none" stroke="#c4c4c4" stroke-width="1.500"/>';
holdings.forEach((v, n) => h += `<rect x="741" y="${f(856 + n * 4.682)}" width="${f((v - 48) / 3)}" height="2.800" fill="#64b24f"/>`);
document.getElementById('chips').innerHTML = h;
```
